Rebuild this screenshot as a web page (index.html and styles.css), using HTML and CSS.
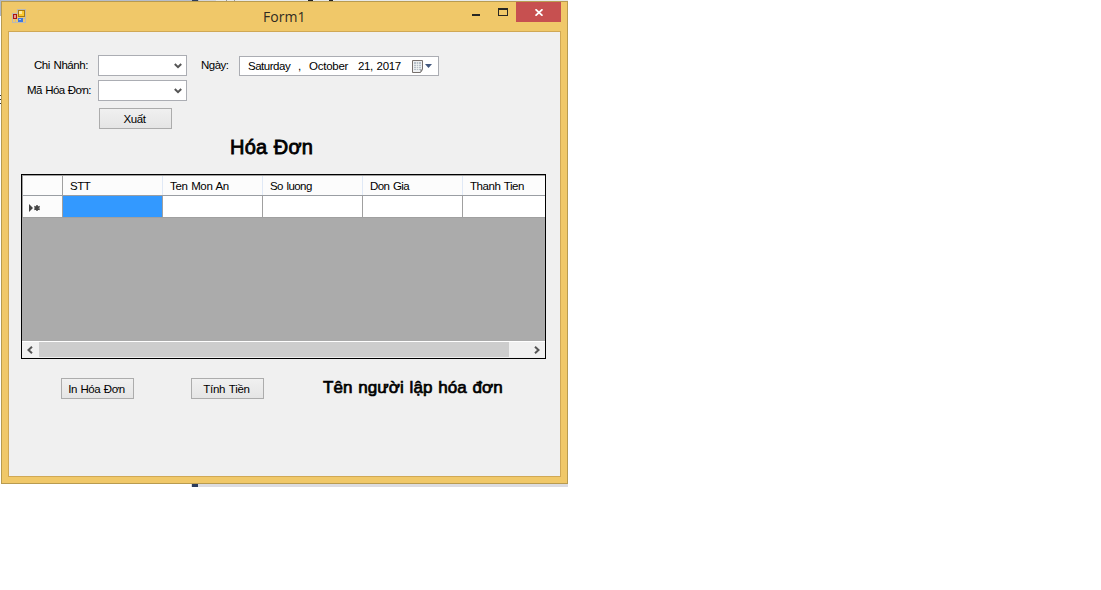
FILE: index.html
```
<!DOCTYPE html>
<html lang="vi">
<head>
<meta charset="utf-8">
<title>Form1</title>
<link rel="stylesheet" href="styles.css">
</head>
<body>
<div class="strip-top"><i class="dark"></i><i class="pale"></i><i class="tick t1"></i><i class="tick t2"></i><i class="tick t3"></i><i class="tick t4"></i></div>
<i class="edge-shade"></i><i class="edge-mark"></i>
<main class="window">
  <header class="titlebar">
    <svg class="app-icon" width="14" height="14" shape-rendering="crispEdges">
      <path d="M.5 4.5h5V.5h8v13h-13zM0 9.500h14M3.500 10v4" fill="none" stroke="#bcb9b2"/>
      <rect x="6" y="1" width="7" height="7" fill="#a67812"/><rect x="7" y="2" width="5" height="5" fill="#fbc82e"/><rect x="7" y="2" width="3" height="3" fill="#ffe999"/>
      <rect x="1" y="5" width="4" height="5" fill="#a81512"/><rect x="2" y="6" width="2" height="3" fill="#e89a92"/>
      <rect x="6" y="9" width="5" height="4" fill="#3f78df"/><rect x="7" y="10" width="2" height="1" fill="#a5c8ff"/>
    </svg>
    <h1 class="title">Form1</h1>
    <svg class="min" width="8" height="2"><path d="M0 0h8v2H0z" fill="#282723"/></svg>
    <svg class="max" width="10" height="8" shape-rendering="crispEdges"><path d="M0 0h10v8H0zM1 2v5h8V2z" fill="#282723" fill-rule="evenodd"/></svg>
    <div class="close"><svg width="8" height="7" viewBox="0 0 8 7"><path d="M.5.300 7.500 6.700M7.500.300.5 6.700" stroke="#fff" stroke-width="1.800"/></svg></div>
  </header>
  <section class="client">
    <form class="fields">
      <label class="label branch">Chi Nhánh:</label>
      <div class="combo"><svg width="8" height="6"><path d="M.8 1 4 4.200 7.200 1" fill="none" stroke="#555" stroke-width="2"/></svg></div>
      <label class="label day">Ngày:</label>
      <div class="date">
        <span class="weekday">Saturday</span><span class="comma">,</span><span class="month">October</span><span class="year">21, 2017</span>
        <svg width="21" height="13"><path d="M.5.500h10v9l-2 3h-8z" fill="#eef0f2" stroke="#77706c"/><path d="M2 2h7v8H2z" fill="#b6bfc8"/><path d="M2 4.500h7M2 6.500h7M2 8.500h7M4.500 2v8M6.500 2v8" stroke="#f4f6f7" stroke-width=".7"/><path d="M8.500 12.500v-3h2z" fill="#777"/><path d="M13 4h7l-3.500 4z" fill="#42577d"/></svg>
      </div>
      <label class="label invoice">Mã Hóa Đơn:</label>
      <div class="combo"><svg width="8" height="6"><path d="M.8 1 4 4.200 7.200 1" fill="none" stroke="#555" stroke-width="2"/></svg></div>
      <div class="button export"><span class="xuat">Xuất</span></div>
    </form>
    <h2 class="heading"><span>Hóa Đơn</span></h2>
    <div class="table">
      <div class="row head"><div class="cell first"></div><div class="cell"><span class="stt">STT</span></div><div class="cell"><span class="mon">Ten Mon An</span></div><div class="cell"><span class="luong">So luong</span></div><div class="cell"><span class="gia">Don Gia</span></div><div class="cell"><span class="tien">Thanh Tien</span></div></div>
      <div class="row body"><div class="cell first"><svg width="11" height="8"><path d="M0 0 4 4 0 8z" fill="#444"/><path d="M8 1v6M5.300 2.500l5.400 3M10.700 2.500l-5.400 3" stroke="#444" stroke-width="1.500"/></svg></div><div class="cell selected"></div><div class="cell"></div><div class="cell"></div><div class="cell"></div><div class="cell"></div></div>
      <div class="scroll"><svg width="6" height="8"><path d="M5 .800 1.500 4 5 7.200" fill="none" stroke="#555" stroke-width="2"/></svg><i class="thumb"></i><svg width="6" height="8"><path d="M1 .800 4.500 4 1 7.200" fill="none" stroke="#555" stroke-width="2"/></svg></div>
    </div>
    <footer class="actions">
      <div class="button"><span class="print">In Hóa Đơn</span></div>
      <div class="button"><span class="pay">Tính Tiền</span></div>
      <strong class="author">Tên người lập hóa đơn</strong>
    </footer>
  </section>
</main>
<div class="strip-bottom"><i></i></div>
</body>
</html>
```
FILE: styles.css
```
* { box-sizing: border-box; }
body { margin: 0; background: #fff; font: 11.5px/15px "Liberation Sans", Arial, sans-serif; letter-spacing: -.43px; word-spacing: .8px; color: #000; overflow: hidden; position: relative; height: 590px; }
svg { display: block; flex: none; }
i { display: block; }
.strip-top { width: 568px; height: 1px; background: linear-gradient(90deg, #b4bccb 216px, #e7e9e9 216px); position: relative; }
.strip-top i { position: absolute; top: 0; height: 1px; }
.dark { left: 192px; width: 6px; background: #2c3c5c; }
.pale { left: 199px; width: 17px; background: #d2d5dc; }
.tick { background: #222; }
.t1 { left: 226px; width: 1px; background: #999; }
.t2 { left: 234px; width: 1px; background: #999; }
.t3 { left: 308px; width: 5px; }
.t4 { left: 329px; width: 4px; }
.edge-shade { position: absolute; left: 0; top: 0; width: 1px; height: 16px; background: #aeb7c8; }
.edge-mark { position: absolute; left: 0; top: 95px; width: 1px; height: 9px; background: repeating-linear-gradient(#333 0 1px, #fff 1px 4px); }
.window { margin-left: 1px; width: 567px; height: 483px; background: #f0c869; border: 1px solid #b89b50; padding: 0 6px 6px; }
.titlebar { height: 29px; display: flex; align-items: flex-start; }
.app-icon { margin: 7px 0 0 4px; }
.title { margin: 4px 0 0; width: 446px; padding-left: 237px; font: 400 14px/21px "Open Sans", "Noto Sans", sans-serif; color: #302b22; letter-spacing: .05px; flex: none; }
.min { margin-top: 12px; }
.max { margin: 6px 8px 0 18px; }
.close { width: 45px; height: 20px; background: #c75050; display: flex; align-items: center; justify-content: center; padding-top: 1px; flex: none; }
.client { height: 446px; border: 1px solid #d0a855; background: #f0f0f0; padding: 23px 14px 0 12px; }
.fields { display: grid; grid-template-columns: 77px 89px 52px 200px; grid-template-rows: 21px 21px 21px; row-gap: 4px; height: 81px; }
.label { white-space: nowrap; line-height: 20px; }
.branch { padding-left: 13px; }
.invoice { padding-left: 6px; letter-spacing: -.6px; }
.day { padding-left: 14px; letter-spacing: -.5px; }
.combo { height: 21px; border: 1px solid #abadb3; background: #fff; display: flex; align-items: center; justify-content: flex-end; padding-right: 4px; }
.date { height: 20px; margin-top: 1px; border: 1px solid #abadb3; background: #fff; display: flex; align-items: center; padding-left: 8px; }
.date span { white-space: nowrap; line-height: 18px; }
.weekday { width: 50px; letter-spacing: -.48px; }
.comma { width: 11px; }
.month { width: 49px; letter-spacing: -.25px; }
.year { width: 54px; letter-spacing: -.35px; }
.button { width: 73px; height: 21px; border: 1px solid #acacac; background: linear-gradient(#f0f0f0, #e5e5e5); display: flex; align-items: center; justify-content: center; padding: 1px 2px 0 0; white-space: nowrap; }
.export { grid-column: 2; margin: 3px 0 0 1px; }
.pay { letter-spacing: -.25px; }
.heading { margin: 0; height: 38px; padding-left: 209px; font: 400 20px/23px "Liberation Sans", Arial, sans-serif; letter-spacing: .2px; -webkit-text-stroke: .8px #000; }
.table { width: 525px; height: 185px; border: 1px solid #000; background: #ababab; display: flex; flex-direction: column; overflow: hidden; }
.row { display: grid; grid-template-columns: 41px 100px 100px 100px 100px 82px; width: 523px; }
.head { height: 21px; background: #fcfcfc; border-top: 1px solid #a0a0a0; border-bottom: 1px solid #9a9ea3; }
.body { height: 22px; background: #fff; border-bottom: 1px solid #a0a0a0; }
.cell { border-right: 1px solid #a0a0a0; white-space: nowrap; }
.cell:last-child { border-right: 0; }
.head .cell { padding: 1px 0 0 7px; line-height: 18px; height: 19px; border-color: #e0e9f6; }
.row .first { border-color: #a0a0a0; background: #fcfcfc; border-left: 1px solid #a0a0a0; }
.body .first { padding: 8px 0 0 6px; }
.mon { letter-spacing: -.35px; }
.luong, .gia { letter-spacing: -.55px; }
.selected { background: #3399ff; }
.scroll { height: 17px; margin-top: auto; border-top: 1px solid #fff; background: #f0f0f0; display: flex; align-items: flex-start; padding: 0 5px; }
.scroll svg { margin-top: 4px; }
.thumb { width: 470px; height: 15px; background: #cdcdcd; margin: 0 25px 0 6px; flex: none; }
.actions { display: flex; padding: 19px 0 0 40px; }
.actions .button { margin-right: 57px; flex: none; }
.author { margin-left: 2px; font-size: 17px; font-weight: 400; line-height: 19px; white-space: nowrap; letter-spacing: .1px; -webkit-text-stroke: .7px #000; }
.strip-bottom { margin-left: 2px; width: 566px; height: 3px; background: linear-gradient(90deg, #fff 189px, #dcdce1 189px); }
.strip-bottom i { margin-left: 190px; width: 6px; height: 3px; background: #2c3c5c; }
```
